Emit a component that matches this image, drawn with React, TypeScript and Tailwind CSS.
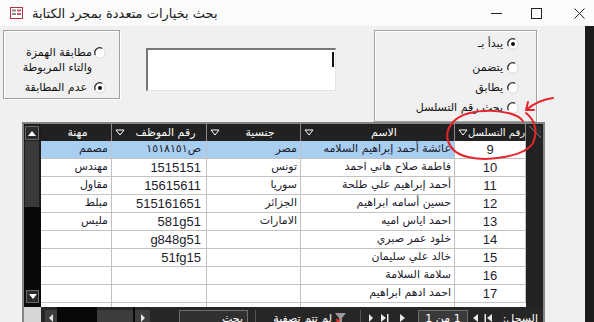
import React from "react";

type Row = { id: string; name: string; nat: string; emp: string; job: string };

const rows: Row[] = [
  { id: "9", name: "عائشة أحمد إبراهيم السلامه", nat: "مصر", emp: "ص١٥١٨١٥١", job: "مصمم" },
  { id: "10", name: "فاطمة صلاح هاني احمد", nat: "تونس", emp: "1515151", job: "مهندس" },
  { id: "11", name: "أحمد إبراهيم علي طلحة", nat: "سوريا", emp: "15615611", job: "مقاول" },
  { id: "12", name: "حسين أسامه ابراهيم", nat: "الجزائر", emp: "515161651", job: "مبلط" },
  { id: "13", name: "احمد اياس اميه", nat: "الامارات", emp: "581g51", job: "مليس" },
  { id: "14", name: "خلود عمر صبري", nat: "", emp: "g848g51", job: "" },
  { id: "15", name: "خالد علي سليمان", nat: "", emp: "51fg15", job: "" },
  { id: "16", name: "سلامة السلامة", nat: "", emp: "", job: "" },
  { id: "17", name: "احمد ادهم ابراهيم", nat: "", emp: "", job: "" },
];

function Radio({ on }: { on?: boolean }) {
  return (
    <svg width="12" height="12" viewBox="0 0 12 12" className="shrink-0">
      <circle cx="6" cy="6" r="5.2" fill="#fff" stroke="#d8d8d8" strokeWidth="1" />
      <path d="M1.3 8 A5 5 0 0 1 8 1.3" fill="none" stroke="#333" strokeWidth="1.3" />
      {on && <circle cx="6" cy="6" r="2" fill="#111" />}
    </svg>
  );
}

function DownTri() {
  return (
    <svg width="10" height="7" viewBox="0 0 10 7" className="shrink-0">
      <polygon points="1,1 9,1 5,6" fill="none" stroke="#fff" strokeWidth="1" />
    </svg>
  );
}

function TitleBar() {
  return (
    <div className="h-[26px] bg-[#fbfbfb] flex items-center">
      <svg width="13" height="12" viewBox="0 0 13 12" className="ml-[10px]">
        <rect x="0.5" y="0.5" width="12" height="11" fill="#fff" stroke="#b0334a" />
        <rect x="2" y="2.5" width="4" height="2" fill="#8a8a8a" />
        <rect x="7" y="2.5" width="4" height="2" fill="#c45a6e" />
        <rect x="2" y="6" width="4" height="2" fill="#8a8a8a" />
        <rect x="7" y="6" width="4" height="2" fill="#c45a6e" />
      </svg>
      <span dir="rtl" className="ml-[9px] text-[13px] leading-none text-[#1a1a1a] font-['DejaVu_Sans',sans-serif]">
        بحث بخيارات متعددة بمجرد الكتابة
      </span>
      <div className="ml-auto flex items-center">
        <svg width="11" height="11" viewBox="0 0 11 11">
          <line x1="0" y1="5.5" x2="11" y2="5.5" stroke="#222" strokeWidth="1" />
        </svg>
        <svg width="11" height="11" viewBox="0 0 11 11" className="ml-[29px]">
          <rect x="0.5" y="0.5" width="10" height="10" fill="none" stroke="#222" strokeWidth="1" />
        </svg>
        <svg width="11" height="11" viewBox="0 0 11 11" className="ml-[32px] mr-[9px]">
          <path d="M0.5 0.5 L10.5 10.5 M10.5 0.5 L0.5 10.5" stroke="#222" strokeWidth="1" />
        </svg>
      </div>
    </div>
  );
}

const groupBox =
  "border border-[#a0a0a0] shadow-[inset_1px_1px_0_#ffffff,1px_1px_0_#ffffff]";

function Top() {
  return (
    <div className="h-[98px] flex items-start text-[11px] text-[#111] font-['DejaVu_Sans',sans-serif]">
      <div className={`ml-[3px] mt-[4px] w-[117px] h-[69px] ${groupBox} flex flex-col items-end pr-[13px]`}>
        <div className="mt-[14px] flex items-start gap-[2px]" dir="ltr">
          <div dir="rtl" className="text-right leading-[15px]">
            <div>مطابقة الهمزة</div>
            <div>والتاء المربوطة</div>
          </div>
          <div className="mt-[2px]">
            <Radio />
          </div>
        </div>
        <div className="mt-[5px] flex items-center gap-[7px]" dir="ltr">
          <span dir="rtl" className="leading-[15px]">عدم المطابقة</span>
          <Radio on />
        </div>
      </div>

      <div className="ml-[26px] mt-[22px] w-[190px] h-[43px] bg-white border-t-2 border-l-2 border-[#777] border-b border-r border-b-[#e4e4e4] border-r-[#e4e4e4] flex justify-end">
        <div className="mt-[2px] mr-[1px] w-[2px] h-[15px] bg-[#111]" />
      </div>

      <div className={`ml-[38px] mt-[4px] w-[163px] h-[92px] ${groupBox} flex flex-col items-end pr-[17px]`}>
        <div className="mt-[7px] h-[12px] flex items-center gap-[4px]">
          <span dir="rtl">يبدأ بـ</span>
          <Radio on />
        </div>
        <div className="mt-[12px] h-[12px] flex items-center gap-[4px]">
          <span dir="rtl">يتضمن</span>
          <Radio />
        </div>
        <div className="mt-[8px] h-[12px] flex items-center gap-[4px]">
          <span dir="rtl">يطابق</span>
          <Radio />
        </div>
        <div className="mt-[8px] h-[12px] flex items-center gap-[4px]">
          <span dir="rtl">بحث رقم التسلسل</span>
          <Radio />
        </div>
      </div>
    </div>
  );
}

function ScrollCol() {
  return (
    <div className="w-[17px] flex flex-col bg-[#1c1c1c]">
      <div className="ml-[1px] mt-[2px] w-[14px] h-[14px] border border-[#6a6a6a] bg-[#2a2a2a] flex items-center justify-center">
        <svg width="8" height="5" viewBox="0 0 8 5">
          <polygon points="0,5 8,5 4,0" fill="#fff" />
        </svg>
      </div>
      <div className="mt-[1px] ml-[1px] w-[14px] h-[66px] bg-[#3a3a3a]" />
      <div className="flex-1 bg-[#090909] flex flex-col justify-end">
        <div className="ml-[2px] mb-[4px] w-[13px] h-[13px] border border-[#6a6a6a] bg-[#2a2a2a] flex items-center justify-center">
          <svg width="8" height="5" viewBox="0 0 8 5">
            <polygon points="0,0 8,0 4,5" fill="#fff" />
          </svg>
        </div>
      </div>
    </div>
  );
}

function HeadCell({ w, label, arrow = true, small = false }: { w: string; label: string; arrow?: boolean; small?: boolean }) {
  return (
    <div className={`${w} h-full flex items-center border-r border-[#8a8a8a] pl-[3px]`}>
      {arrow ? <DownTri /> : null}
      <span
        dir="rtl"
        className={`flex-1 text-center text-white whitespace-nowrap leading-none ${small ? "text-[10px]" : "text-[11px]"}`}
      >
        {label}
      </span>
    </div>
  );
}

function Grid() {
  const cell = "h-full border-r border-[#c3c3c3] flex items-center";
  const ar = "justify-end pr-[3px] text-[11px] text-[#1c1c2c] whitespace-nowrap";
  const num = "font-['Liberation_Sans',Arial,sans-serif] text-[13px] text-[#1c1c2c]";
  return (
    <div className="w-[485px] flex flex-col font-['DejaVu_Sans',sans-serif]">
      <div className="h-[17px] flex bg-[#212121]">
        <HeadCell w="w-[71px]" label="مهنة" arrow={false} />
        <HeadCell w="w-[95px]" label="رقم الموظف" />
        <HeadCell w="w-[94px]" label="جنسية" />
        <HeadCell w="w-[154px]" label="الاسم" />
        <HeadCell w="w-[71px]" label="رقم التسلسل" small />
      </div>
      {rows.map((r, i) => {
        const sel = i === 0;
        const bg = sel ? "bg-[#a8cef2]" : "bg-white";
        return (
          <div key={r.id} className="h-[18px] flex border-b border-[#c3c3c3] bg-white">
            <div className={`w-[71px] ${cell} ${ar} ${bg}`}>
              <span dir="rtl">{r.job}</span>
            </div>
            <div className={`w-[95px] ${cell} ${bg} justify-end pr-[5px]`}>
              <span dir="rtl" className={r.emp.startsWith("ص") ? "text-[11px] text-[#1c1c2c]" : num}>
                {r.emp}
              </span>
            </div>
            <div className={`w-[94px] ${cell} ${ar} ${bg}`}>
              <span dir="rtl">{r.nat}</span>
            </div>
            <div className={`w-[154px] ${cell} ${ar} ${bg}`}>
              <span dir="rtl">{r.name}</span>
            </div>
            <div className={`w-[71px] ${cell} justify-center bg-white`}>
              <span className={num}>{r.id}</span>
            </div>
          </div>
        );
      })}
      <div className="h-[4px] flex bg-white">
        <div className="w-[71px] h-full border-r border-[#c3c3c3]" />
        <div className="w-[95px] h-full border-r border-[#c3c3c3]" />
        <div className="w-[94px] h-full border-r border-[#c3c3c3]" />
        <div className="w-[154px] h-full border-r border-[#c3c3c3]" />
        <div className="w-[71px] h-full" />
      </div>
    </div>
  );
}

function SelCol() {
  return (
    <div className="w-[17px] flex flex-col bg-[#222]">
      <div className="h-[17px] relative">
        <svg width="17" height="17" viewBox="0 0 17 17">
          <polygon points="3,2 15,2 15,14" fill="#2e2e2e" />
          <line x1="3" y1="2" x2="15" y2="14" stroke="#777" strokeWidth="1" />
        </svg>
      </div>
    </div>
  );
}

function NavBtn({ d }: { d: string }) {
  return (
    <svg width="10" height="10" viewBox="0 0 10 10" className="shrink-0">
      <path d={d} fill="#e8e8e8" />
    </svg>
  );
}

function NavBar() {
  return (
    <div className="h-[20px] flex bg-[#262626] text-[11px] text-white font-['DejaVu_Sans',sans-serif] leading-none">
      <div className="w-[17px] bg-[#d6d6d6]" />
      <div className="w-[4px]" />
      <div className="w-[12px] mt-[3px] h-[15px] bg-[#3d3d3d] flex items-center justify-center">
        <NavBtn d="M7 1 L3 5 L7 9 Z" />
      </div>
      <div className="w-[40px] bg-[#080808]" />
      <div className="w-[36px] mt-[3px] h-[15px] bg-[#3c3c3c]" />
      <div className="w-[2px] bg-[#080808]" />
      <div className="w-[15px] mt-[3px] h-[15px] bg-[#3d3d3d] flex items-center justify-center">
        <NavBtn d="M3 1 L7 5 L3 9 Z" />
      </div>
      <div className="w-[29px]" />
      <div className="w-[69px] mt-[3px] h-[16px] border border-[#6e6e6e] bg-[#303030] flex items-center justify-end pr-[4px]">
        <span dir="rtl">بحث</span>
      </div>
      <div className="w-[7px]" />
      <div className="w-[105px] mt-[3px] h-[16px] border-l border-[#555] flex items-center justify-end pr-[14px] gap-[3px]">
        <span dir="rtl">لم تتم تصفية</span>
        <svg width="11" height="11" viewBox="0 0 11 11" className="shrink-0">
          <polygon points="0,0 11,0 7,5 7,11 4,9 4,5" fill="#9a9a9a" />
          <path d="M1 6 L5 10 M5 6 L1 10" stroke="#e03030" strokeWidth="1.5" />
        </svg>
      </div>
      <div className="w-[8px] border-l border-[#555] mt-[3px]" />
      <div className="w-[40px] mt-[3px] h-[16px] flex items-center gap-[2px]">
        <NavBtn d="M1 1 L5 5 L1 9 Z M6 2 L9 2 M7.5 0.5 L7.5 3.5" />
        <NavBtn d="M1 1 L6 5 L1 9 Z M7 1 L8.5 1 L8.5 9 L7 9 Z" />
        <div className="w-[6px]" />
        <NavBtn d="M2 1 L7 5 L2 9 Z" />
      </div>
      <div className="w-[10px]" />
      <div className="w-[50px] mt-[3px] h-[16px] border border-[#6e6e6e] bg-[#3a3a3a] flex items-center justify-center">
        <span dir="rtl">1 من 1</span>
      </div>
      <div className="w-[26px] mt-[3px] h-[16px] flex items-center justify-center gap-[3px]">
        <NavBtn d="M8 1 L3 5 L8 9 Z" />
        <NavBtn d="M9 1 L4 5 L9 9 Z M1.5 1 L3 1 L3 9 L1.5 9 Z" />
      </div>
      <div className="flex-1 mt-[3px] h-[16px] flex items-center justify-end pr-[5px]">
        <span dir="rtl">السجل:</span>
      </div>
    </div>
  );
}

function Table() {
  return (
    <div className="ml-[22px] w-[523px] border-2 border-b-0 border-[#858585] bg-[#1e1e1e] flex flex-col">
      <div className="h-[183px] flex">
        <ScrollCol />
        <Grid />
        <SelCol />
      </div>
      <NavBar />
    </div>
  );
}

function Annotation() {
  return (
    <svg
      width="594"
      height="322"
      viewBox="0 0 594 322"
      className="absolute left-0 top-0 pointer-events-none"
    >
      <path
        d="M523 121 C513 108 470 107 454 121 C442 133 446 152 468 157 C490 162 525 156 533 143 C538 132 535 120 526 113"
        fill="none"
        stroke="#e5252d"
        strokeWidth="2"
        strokeLinecap="round"
      />
      <path
        d="M553 98 Q538 100 526 110 M526 110 L528 102 M526 110 L534 110"
        fill="none"
        stroke="#e5252d"
        strokeWidth="2"
        strokeLinecap="round"
      />
    </svg>
  );
}

export default function App() {
  return (
    <div className="w-[594px] h-[322px] overflow-hidden relative bg-[#f0f0f0]">
      <TitleBar />
      <div className="flex h-[296px]">
        <div className="w-[585px] flex flex-col">
          <Top />
          <Table />
        </div>
        <div className="w-[9px] bg-[#1c1c1c]" />
      </div>
      <Annotation />
    </div>
  );
}
